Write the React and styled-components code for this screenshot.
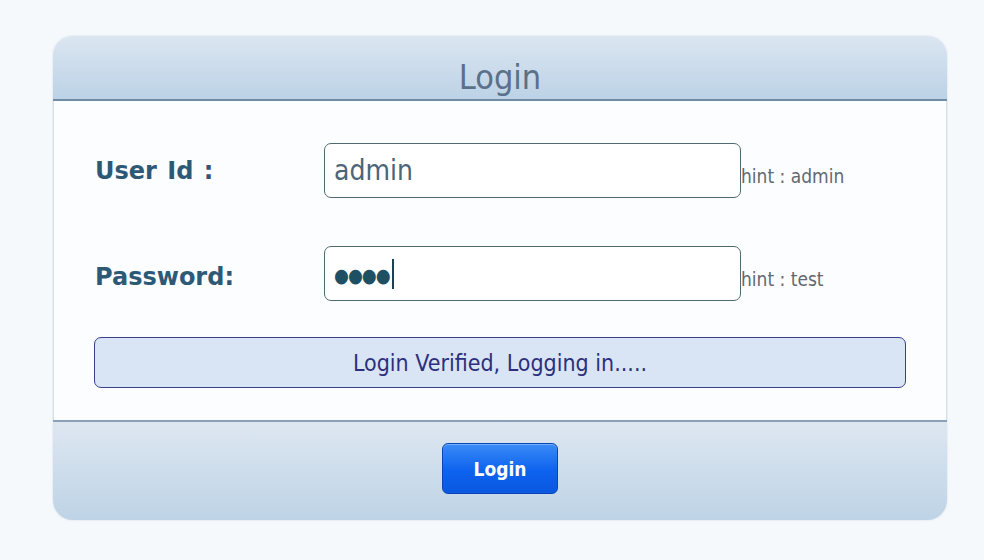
import React from 'react'
import styled, { createGlobalStyle } from 'styled-components'

const Global = createGlobalStyle`
  html, body {
    margin: 0;
    background: #f6f9fc;
  }
  body {
    font-family: "DejaVu Sans Condensed", "DejaVu Sans", sans-serif;
  }
`

const Pagina = styled.div`
  width: 984px;
  height: 560px;
  padding: 36px 0 0 53px;
  box-sizing: border-box;
`
const Painel = styled.div`
  width: 894px;
  border-radius: 20px;
  overflow: hidden;
  box-shadow: 0 0 2px rgba(120, 150, 180, 0.35);
`
const Cabecalho = styled.div`
  height: 65px;
  background: linear-gradient(#dbe6f1, #bcd2e6);
  border-bottom: 2px solid #6f8ba6;
  display: flex;
  align-items: flex-end;
  justify-content: center;
  box-sizing: border-box;
`
const Titulo = styled.h1`
  margin: 0;
  font-weight: normal;
  font-size: 34px;
  color: #5a7189;
  line-height: 44px;
`
const Corpo = styled.div`
  background: #fcfdff;
  border-left: 1px solid #d5e0ea;
  border-right: 1px solid #d5e0ea;
  padding: 42px 39px 32px 39px;
  display: flex;
  flex-direction: column;
`
const Linha = styled.div`
  display: grid;
  grid-template-columns: 231px 417px auto;
  align-items: center;
  margin-bottom: ${(p) => p.gap || 0}px;
`
const Rotulo = styled.label`
  font-family: "DejaVu Sans", sans-serif;
  font-weight: bold;
  font-size: 24px;
  word-spacing: 2px;
  color: #2c5a76;
  padding-left: 2px;
  padding-top: ${(p) => p.down || 0}px;
`
const Campo = styled.div`
  height: 55px;
  box-sizing: border-box;
  border: 1.5px solid #506a72;
  border-radius: 7px;
  background: #fff;
  display: flex;
  align-items: center;
  padding-left: 9px;
  font-size: 28px;
  color: #4b6579;
`
const Pontos = styled.span`
  color: #1f4f63;
  font-size: 19px;
  letter-spacing: -1px;
  padding-top: ${(p) => p.down || 0}px;
`
const Cursor = styled.span`
  display: inline-block;
  width: 2px;
  height: 30px;
  background: #1f3f52;
  margin-left: 2px;
`
const Dica = styled.span`
  font-size: 19px;
  color: #62686f;
  padding-top: 11px;
`
const Aviso = styled.div`
  height: 51px;
  margin: 36px 1px 0 1px;
  box-sizing: border-box;
  background: #d9e5f5;
  border: 1.5px solid #3b3f8c;
  border-radius: 7px;
  display: flex;
  align-items: center;
  justify-content: center;
  font-size: 23px;
  color: #2c307c;
`
const Rodape = styled.div`
  height: 100px;
  border-top: 2px solid #8aa0b5;
  background: linear-gradient(#dde7f1, #bed3e6);
  display: flex;
  justify-content: center;
  padding-top: 21px;
  box-sizing: border-box;
`
const Botao = styled.button`
  width: 116px;
  height: 51px;
  border-radius: 6px;
  border: 1px solid #0c46b6;
  background: linear-gradient(#3a8bf7, #0d62ee 55%, #0a58e0);
  color: #fff;
  font-family: "DejaVu Sans Condensed", "DejaVu Sans", sans-serif;
  font-weight: bold;
  font-size: 19px;
  box-shadow: inset 0 1px 0 rgba(255, 255, 255, 0.3);
  cursor: pointer;
`

const App = () => {
  return (
    <Pagina>
      <Global />
      <Painel>
        <Cabecalho>
          <Titulo>Login</Titulo>
        </Cabecalho>
        <Corpo>
          <Linha gap={48}>
            <Rotulo>User Id :</Rotulo>
            <Campo>admin</Campo>
            <Dica>hint : admin</Dica>
          </Linha>
          <Linha>
            <Rotulo down={6}>Password:</Rotulo>
            <Campo>
              <Pontos down={2}>●●●●</Pontos>
              <Cursor />
            </Campo>
            <Dica>hint : test</Dica>
          </Linha>
          <Aviso>Login Verified, Logging in.....</Aviso>
        </Corpo>
        <Rodape>
          <Botao>Login</Botao>
        </Rodape>
      </Painel>
    </Pagina>
  )
}

export default App
